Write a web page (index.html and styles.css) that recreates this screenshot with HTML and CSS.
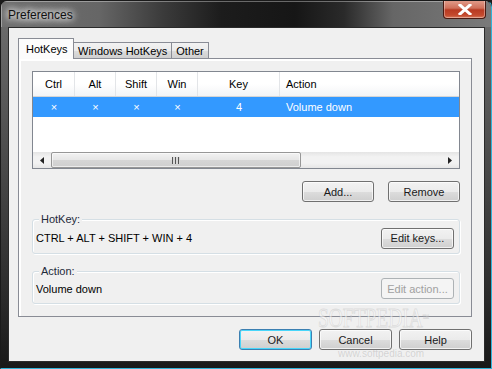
FILE: index.html
```html
<!DOCTYPE html>
<html lang="en">
<head>
    <meta charset="UTF-8">
    <title>Preferences</title>
    <link rel="stylesheet" href="styles.css">
</head>
<body>
    <div class="window">
        <div class="titlebar">
            <span class="title">Preferences</span>
            <button class="close-button">
                <svg width="14" height="11" viewBox="0 0 14 11">
                    <path d="M2 1 L12 10 M12 1 L2 10" stroke="#fff" stroke-width="3" stroke-linecap="square"/>
                </svg>
            </button>
        </div>
        <div class="frame">
            <div class="client">
                <div class="tabs">
                    <div class="tab active">HotKeys</div>
                    <div class="tab">Windows HotKeys</div>
                    <div class="tab">Other</div>
                </div>
                <div class="panel">
                    <div class="list">
                        <div class="list-header">
                            <div class="col center">Ctrl</div>
                            <div class="col center">Alt</div>
                            <div class="col center">Shift</div>
                            <div class="col center">Win</div>
                            <div class="col center">Key</div>
                            <div class="col">Action</div>
                        </div>
                        <div class="list-row selected">
                            <div class="col center">×</div>
                            <div class="col center">×</div>
                            <div class="col center">×</div>
                            <div class="col center">×</div>
                            <div class="col center">4</div>
                            <div class="col">Volume down</div>
                        </div>
                        <div class="list-space"></div>
                        <div class="hscroll">
                            <div class="arrow"><svg width="4" height="7" viewBox="0 0 4 7"><path d="M4 0 L0 3.5 L4 7 Z" fill="#222"/></svg></div>
                            <div class="thumb"><span class="grip"></span></div>
                            <div class="track"></div>
                            <div class="arrow"><svg width="4" height="7" viewBox="0 0 4 7"><path d="M0 0 L4 3.5 L0 7 Z" fill="#222"/></svg></div>
                        </div>
                    </div>

                    <div class="list-buttons">
                        <button class="btn">Add...</button>
                        <button class="btn">Remove</button>
                    </div>

                    <div class="group hotkey-group">
                        <span class="group-label">HotKey:</span>
                        <span class="group-text">CTRL + ALT + SHIFT + WIN + 4</span>
                        <button class="btn">Edit keys...</button>
                    </div>

                    <div class="group action-group">
                        <span class="group-label">Action:</span>
                        <span class="group-text">Volume down</span>
                        <button class="btn" disabled>Edit action...</button>
                    </div>
                </div>

                <div class="footer">
                    <button class="btn default">OK</button>
                    <button class="btn">Cancel</button>
                    <button class="btn">Help</button>
                </div>

                <div class="watermark">SOFTPEDIA<span class="tm">™</span></div>
                <div class="watermark-url">www.softpedia.com</div>
            </div>
        </div>
    </div>
</body>
</html>
```

FILE: styles.css
```css
body {
    margin: 0;
    background-color: #1b1b1b;
    font-family: 'Liberation Sans', Arial, sans-serif;
    font-size: 11px;
    color: #000;
}

.window {
    width: 492px;
    height: 369px;
    box-sizing: border-box;
    border: 1px solid #1a1a1a;
    border-right-color: #2fb4d8;
    border-bottom-color: #2fb4d8;
    border-radius: 7px 7px 0 0;
    background: linear-gradient(to right, #3a3a3a, #1e1e1e 20%, #262626 30%, #111 60%, #2c2c2c);
    overflow: hidden;
}

.titlebar {
    height: 26px;
    display: flex;
    align-items: flex-start;
    background: linear-gradient(to right, #707070 0%, #666 20%, #3b3b3b 33%, #1c1c1c 45%, #161616 60%, #2a2a2a 70%, #666 80%, #7a7a7a 100%);
    box-shadow: inset 1px 1px 0 rgba(255, 255, 255, 0.35);
}

.title {
    margin: 7px 0 0 7px;
    font-size: 12px;
    color: #111;
    text-shadow: 0 0 6px #fff, 0 0 8px #fff, 0 0 10px rgba(255, 255, 255, 0.8);
}

.close-button {
    margin: -1px 5px 0 auto;
    width: 43px;
    height: 19px;
    padding: 0;
    border: 1px solid #4a1a12;
    border-top: none;
    border-radius: 0 0 4px 4px;
    background: linear-gradient(to bottom, #e3a08f 0%, #d0705a 45%, #b83a22 55%, #c44a2e 85%, #d77a5c 100%);
    box-shadow: inset 0 0 0 1px rgba(255, 255, 255, 0.35);
    display: flex;
    align-items: center;
    justify-content: center;
}

.frame {
    padding: 0 6px 6px 7px;
    background: linear-gradient(to bottom, #6a6a6a, #4a4a4a 40%, #2a2a2a 80%, #181818);
}

.client {
    position: relative;
    height: 335px;
    box-sizing: border-box;
    border: 1px solid #2a2a2a;
    background-color: #f0f0f0;
    padding: 10px 12px 0 9px;
}

.tabs {
    display: flex;
    align-items: flex-end;
    height: 20px;
    position: relative;
    z-index: 1;
}

.tab {
    height: 16px;
    box-sizing: border-box;
    border: 1px solid #898c95;
    border-bottom: none;
    margin-left: -1px;
    padding: 1px 4px 0;
    line-height: 14px;
    background: linear-gradient(to bottom, #f2f2f2, #ebebeb 50%, #dddddd 51%, #cfcfcf);
}

.tab.active {
    height: 21px;
    margin-left: 0;
    margin-bottom: -1px;
    padding: 3px 8px 0 7px;
    background: #fcfcfc;
    width: 56px;
    box-sizing: border-box;
}

.tab.active + .tab {
    margin-left: -1px;
}

.panel {
    height: 259px;
    box-sizing: border-box;
    border: 1px solid #898c95;
    box-shadow: inset 2px 2px 0 #fff;
    padding: 12px 11px 0 13px;
}

.list {
    height: 98px;
    box-sizing: border-box;
    border: 1px solid #828790;
    background-color: #fff;
    display: flex;
    flex-direction: column;
}

.list-header, .list-row {
    display: grid;
    grid-template-columns: 42px 41px 41px 41px 82px 1fr;
}

.list-header {
    height: 25px;
    box-sizing: border-box;
    border-bottom: 1px solid #d5d5d5;
    background: linear-gradient(to bottom, #fff, #fff 50%, #f3f4f6);
    line-height: 24px;
}

.list-header .col {
    border-right: 1px solid #e3e5e8;
    padding-left: 6px;
}

.list-header .col.center {
    padding-left: 0;
}

.list-header .col:last-child {
    border-right: none;
}

.list-row {
    height: 20px;
    line-height: 20px;
}

.list-row .col {
    padding-left: 6px;
}

.list-row .col.center {
    padding-left: 0;
}

.list-row.selected {
    background-color: #3399ff;
    color: #fff;
}

.center {
    text-align: center;
}

.list-space {
    flex-grow: 1;
}

.hscroll {
    height: 16px;
    display: flex;
    background: linear-gradient(to bottom, #e4e4e4, #f2f2f2 30%, #f2f2f2 70%, #e6e6e6);
}

.arrow {
    width: 18px;
    display: flex;
    align-items: center;
    justify-content: center;
}

.thumb {
    width: 250px;
    box-sizing: border-box;
    border: 1px solid #979797;
    border-radius: 2px;
    background: linear-gradient(to bottom, #f2f2f2, #e6e6e6 50%, #d6d6d6 51%, #cfcfcf);
    box-shadow: inset 0 0 0 1px rgba(255, 255, 255, 0.6);
    display: flex;
    align-items: center;
    justify-content: center;
}

.grip {
    width: 8px;
    height: 7px;
    background: repeating-linear-gradient(to right, #555 0, #555 1px, #d8d8d8 1px, #d8d8d8 3px);
}

.track {
    flex-grow: 1;
}

.btn {
    height: 21px;
    padding: 0;
    box-sizing: border-box;
    border: 1px solid #707070;
    border-radius: 3px;
    background: linear-gradient(to bottom, #f2f2f2, #ebebeb 50%, #dddddd 51%, #cfcfcf);
    box-shadow: inset 0 0 0 1px rgba(255, 255, 255, 0.7);
    font-family: 'Liberation Sans', Arial, sans-serif;
    font-size: 11px;
    color: #1a1a1a;
}

.btn:disabled {
    border-color: #adb2b5;
    background: #f4f4f4;
    color: #a0a0a0;
    box-shadow: none;
}

.list-buttons {
    display: flex;
    justify-content: flex-end;
    gap: 14px;
    margin-top: 12px;
}

.list-buttons .btn {
    width: 72px;
}

.group {
    position: relative;
    display: flex;
    align-items: center;
    justify-content: space-between;
    border: 1px solid #d5dfe5;
    border-radius: 3px;
    box-shadow: inset 1px 1px 0 #fff, 1px 1px 0 #fff;
    padding: 7px 5px 4px 3px;
}

.hotkey-group {
    margin-top: 17px;
    height: 35px;
    box-sizing: border-box;
}

.action-group {
    margin-top: 17px;
    height: 33px;
    box-sizing: border-box;
    padding-top: 6px;
}

.group .btn {
    width: 73px;
}

.group-label {
    position: absolute;
    left: 6px;
    top: -7px;
    padding: 0 2px;
    background-color: #f0f0f0;
    color: #1e2a3a;
}

.footer {
    display: flex;
    justify-content: flex-end;
    gap: 7px;
    margin-top: 12px;
}

.footer .btn {
    width: 73px;
}

.btn.default {
    border-color: #3c7fb1;
    box-shadow: inset 0 0 0 1px #48d6fa;
}

.watermark {
    position: absolute;
    left: 309px;
    top: 280px;
    font-family: 'Liberation Serif', serif;
    font-size: 27px;
    line-height: 20px;
    transform: scaleX(0.72);
    transform-origin: left top;
    color: rgba(255, 255, 255, 0.55);
    -webkit-text-stroke: 1px rgba(150, 150, 150, 0.25);
    pointer-events: none;
}

.watermark .tm {
    font-size: 9px;
    vertical-align: top;
}

.watermark-url {
    position: absolute;
    left: 329px;
    top: 320px;
    font-size: 10px;
    line-height: 11px;
    color: rgba(120, 120, 120, 0.25);
    pointer-events: none;
}
```
